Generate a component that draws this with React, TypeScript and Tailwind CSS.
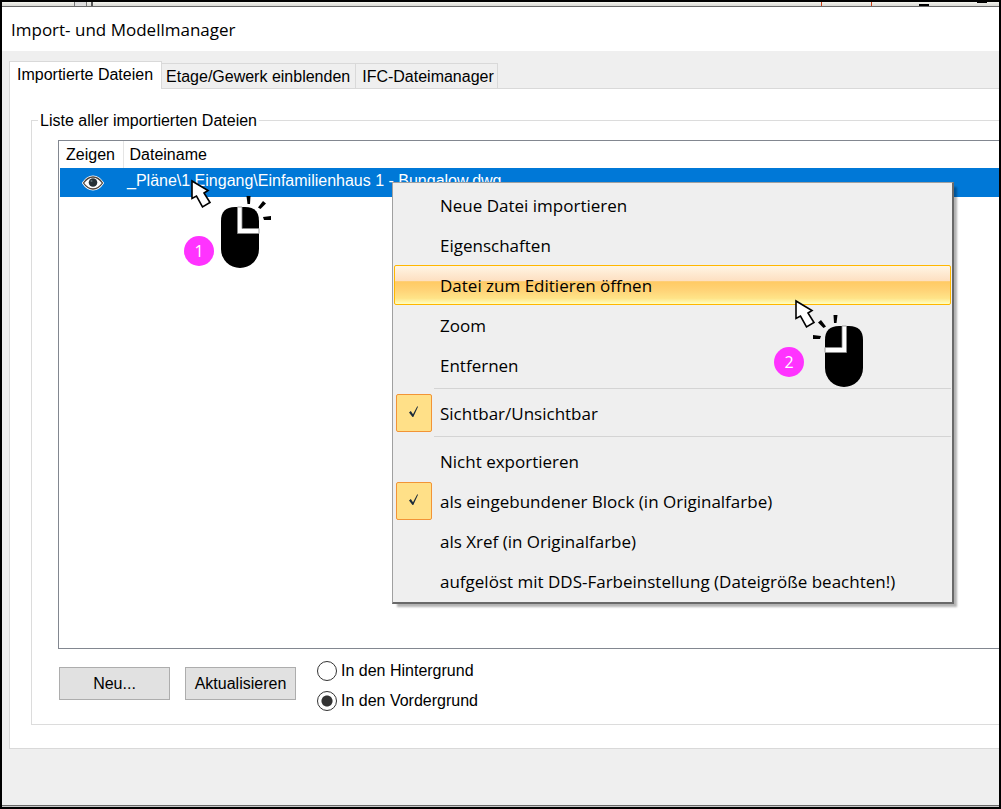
import React, { useState } from 'react';

interface MenuEntry {
  label: string;
  checked?: boolean;
  separatorBefore?: boolean;
}

const menuEntries: MenuEntry[] = [
  { label: 'Neue Datei importieren' },
  { label: 'Eigenschaften' },
  { label: 'Datei zum Editieren öffnen' },
  { label: 'Zoom' },
  { label: 'Entfernen' },
  { label: 'Sichtbar/Unsichtbar', checked: true, separatorBefore: true },
  { label: 'Nicht exportieren', separatorBefore: true },
  { label: 'als eingebundener Block (in Originalfarbe)', checked: true },
  { label: 'als Xref (in Originalfarbe)' },
  { label: 'aufgelöst mit DDS-Farbeinstellung (Dateigröße beachten!)' },
];

const tabs = ['Importierte Dateien', 'Etage/Gewerk einblenden', 'IFC-Dateimanager'];

const EyeIcon = () => (
  <svg width="22" height="16" viewBox="0 0 22 16" className="mx-auto block">
    <path d="M1 8C4 3.4 7.300 1.500 11 1.500S18 3.400 21 8C18 12.600 14.700 14.500 11 14.500S4 12.600 1 8Z" fill="#fff" stroke="#fff" strokeWidth="2" />
    <path d="M1.500 8C4.300 4 7.500 2 11 2s6.700 2 9.500 6C17.700 12 14.500 14 11 14S4.300 12 1.500 8Z" fill="#fff" stroke="#4a4038" strokeWidth="1.300" />
    <circle cx="11" cy="7.500" r="4.300" fill="#263238" />
    <circle cx="9.500" cy="6" r="1" fill="#607078" />
  </svg>
);

const CheckIcon = () => (
  <svg width="12" height="14" viewBox="0 0 12 14">
    <path d="M1 6.500L2.800 5L5 8.300L9.300 0.300L10 0.800L5.300 11H4.500Z" fill="#1c2b3a" />
  </svg>
);

const PointerIcon = () => (
  <svg width="22" height="30" viewBox="0 0 22 30">
    <path d="M2 2V19.500L6.500 17L12.500 28L20 23.500L14 14L18 11.500Z" fill="#fff" stroke="#000" strokeWidth="1.600" />
  </svg>
);

// Mouse with the pressed button cut out; mirrored for the left button
const MouseIcon = ({ button }: { button: 'left' | 'right' }) => (
  <svg width="54" height="74" viewBox="0 0 54 74">
    <g transform={button === 'left' ? 'translate(54 0) scale(-1 1)' : undefined}>
      <rect x="2" y="12" width="38" height="61" rx="19" ry="19" fill="#000" />
      <path d="M2 35V26Q2 12 16 12H26Q40 12 40 26V35Z" fill="#000" />
      <path d="M18.500 12H23V33.500H40V38.500H18.500Z" fill="#fff" stroke="#888" strokeWidth="0.800" />
      <path d="M27.500 1H31.500L31 9H28.500Z" fill="#000" />
      <path d="M44 6L47 8.500L41.500 14L39 12.500Z" fill="#000" />
      <path d="M44 22L52 21V25H45Z" fill="#000" />
    </g>
  </svg>
);

const StepBadge = ({ children }: { children: React.ReactNode }) => (
  <span className="flex h-[30px] w-[30px] items-center justify-center rounded-full bg-[#ff33ff] pb-px font-['Open_Sans',sans-serif] text-base text-white">
    {children}
  </span>
);

const ContextMenu = () => (
  <ul
    role="menu"
    className="border border-[#a0a0a0] border-r-2 border-b-2 border-r-[#696969] border-b-[#696969] bg-[#efefef] px-px pt-[2px] pb-px font-['Open_Sans',sans-serif] text-[17px] shadow-[4px_4px_2px_-1px_rgba(0,0,0,0.3)]"
  >
    {menuEntries.map((entry, index) => (
      <li key={entry.label} role="none">
        {entry.separatorBefore && (
          <div role="separator" className="ml-10 h-2 pt-[3px]">
            <div className="h-px bg-[#d4d4d4]" />
          </div>
        )}
        <button
          type="button"
          role="menuitem"
          className={`flex h-10 w-full items-center rounded-xs border pl-px text-left whitespace-nowrap ${
            index === 2
              ? 'border-[#ffb700] bg-linear-[180deg,#fff5e4_0%,#fddfc0_40%,#ffca64_41%,#ffd478_65%,#ffe488_85%,#ffffc0_100%]'
              : 'border-transparent'
          }`}
        >
          <span
            className={`flex h-[38px] w-9 items-center justify-center rounded-xs border ${
              entry.checked ? 'border-[#f29436] bg-[#ffe088]' : 'border-transparent'
            }`}
          >
            {entry.checked && <CheckIcon />}
          </span>
          <span className="ml-2 pt-[2px]">{entry.label}</span>
        </button>
      </li>
    ))}
  </ul>
);

const App: React.FC = () => {
  const [placement, setPlacement] = useState('front');

  const placements = [
    { value: 'back', label: 'In den Hintergrund' },
    { value: 'front', label: 'In den Vordergrund' },
  ];

  return (
    <div className="relative flex min-h-screen flex-col overflow-hidden border-2 border-black bg-[#efefef] font-['Liberation_Sans',Arial,sans-serif] text-base leading-5 text-black">
      {/* Edge of the drawing window behind the dialog */}
      <div className="flex h-[5px] border-b border-[#696969] bg-linear-to-b from-[#f4f4ee] to-[#d8d8d4]">
        <span className="ml-[72px] w-[13px] border-x border-[#777] bg-[#ddd]" />
        <span className="ml-1 w-[2px] bg-[#555]" />
        <span className="ml-auto w-[51px] border-x border-[#c83c14]" />
        <span className="ml-[47px] w-[10px] border-b-2 border-black" />
        <span className="mr-[12px] ml-[48px] w-[10px] border-t border-black" />
      </div>

      <header className="flex h-11 items-center bg-white pt-[2px] pl-[9px]">
        <h1 className="font-['Open_Sans',sans-serif] text-[17px]">Import- und Modellmanager</h1>
      </header>

      <main className="flex flex-1 flex-col pt-[10px] pb-14 pl-[7px]">
        <div role="tablist" className="flex items-end">
          {tabs.map((tab, index) => (
            <button
              key={tab}
              type="button"
              role="tab"
              aria-selected={index === 0}
              className={
                index === 0
                  ? 'relative z-10 -mb-px h-[28px] border border-b-0 border-[#d9d9d9] bg-white pr-2 pb-[2px] pl-[7px] whitespace-nowrap'
                  : 'h-[25px] border-t border-r border-[#d9d9d9] pt-px pr-[5px] pl-1 whitespace-nowrap last:pr-[3px] last:pl-[6px]'
              }
            >
              {tab}
            </button>
          ))}
        </div>

        <div role="tabpanel" className="flex flex-1 flex-col border border-r-0 border-[#d9d9d9] bg-white pt-[31px] pb-[23px] pl-[21px]">
          <section aria-labelledby="file-list-title" className="flex flex-1 flex-col border border-r-0 border-[#dcdcdc] pb-2">
            <h2 id="file-list-title" className="-mt-[10px] ml-[6px] self-start bg-white px-[2px]">
              Liste aller importierten Dateien
            </h2>

            <div className="mt-[9px] ml-[26px] flex-1 border border-r-0 border-[#828790] pl-px">
              <table className="w-full table-fixed border-collapse text-left">
                <thead>
                  <tr className="h-[27px]">
                    <th className="w-[63px] border-r border-[#e5e5e5] pl-[6px] font-normal">Zeigen</th>
                    <th className="pl-[6px] font-normal">Dateiname</th>
                  </tr>
                </thead>
                <tbody>
                  <tr className="h-[29px] bg-[#0078d7] text-white">
                    <td className="pl-[3px]"><EyeIcon /></td>
                    <td className="pb-1 pl-1">_Pläne\1 Eingang\Einfamilienhaus 1 - Bungalow.dwg</td>
                  </tr>
                </tbody>
              </table>
            </div>

            <div className="mt-[7px] ml-[27px] flex items-start">
              <div className="flex gap-[15px] pt-[11px]">
                <button type="button" className="h-[33px] w-[111px] border border-[#adadad] bg-[#e1e1e1]">Neu...</button>
                <button type="button" className="h-[33px] w-[111px] border border-[#adadad] bg-[#e1e1e1]">Aktualisieren</button>
              </div>
              <div className="ml-[21px]">
                {placements.map(({ value, label }) => (
                  <label key={value} className="flex h-[30px] items-center gap-1">
                    <input
                      type="radio"
                      name="placement"
                      value={value}
                      checked={placement === value}
                      onChange={() => setPlacement(value)}
                      className="h-5 w-5 appearance-none rounded-full border border-[#333] bg-white checked:bg-radial checked:from-[#333] checked:from-[5px] checked:to-white checked:to-[6px]"
                    />
                    {label}
                  </label>
                ))}
              </div>
            </div>
          </section>
        </div>
      </main>

      <div className="flex h-[2px] border-t border-[#696969] bg-[#c8c8c8]" />

      <div className="absolute top-[180px] left-[390px] w-[562px]">
        <ContextMenu />
      </div>

      {/* Step 1: right click on the file row */}
      <div className="absolute top-[177px] left-[188px]"><PointerIcon /></div>
      <div className="absolute top-[193px] left-[217px]"><MouseIcon button="right" /></div>
      <div className="absolute top-[234px] left-[182px]"><StepBadge>1</StepBadge></div>

      {/* Step 2: left click on the menu entry */}
      <div className="absolute top-[297px] left-[792px]"><PointerIcon /></div>
      <div className="absolute top-[312px] left-[809px]"><MouseIcon button="left" /></div>
      <div className="absolute top-[345px] left-[772px]"><StepBadge>2</StepBadge></div>
    </div>
  );
};

export default App;
